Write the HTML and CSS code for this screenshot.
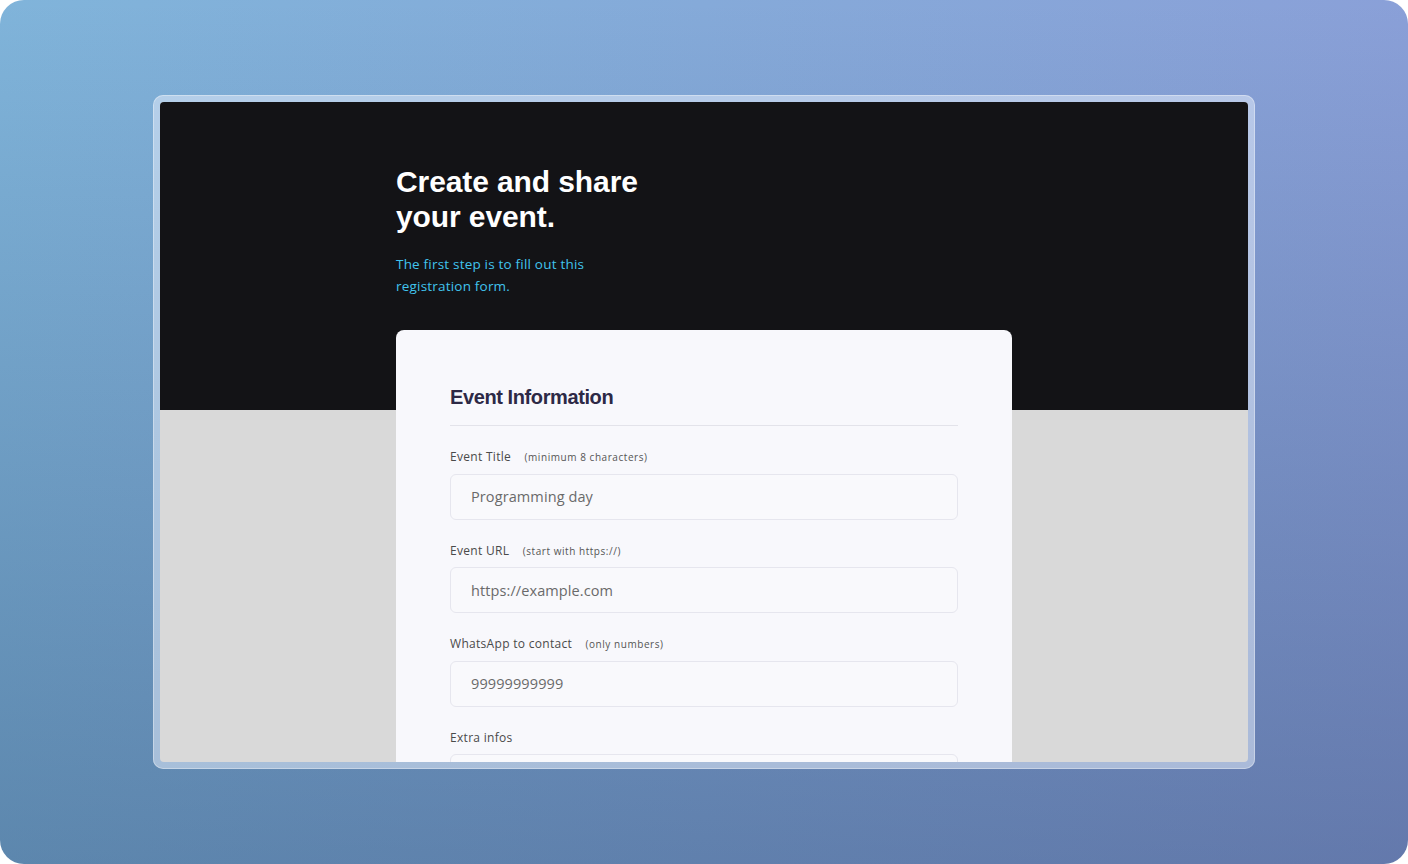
FILE: index.html
```html
<!DOCTYPE html>
<html lang="en">
<head>
<meta charset="utf-8">
<title>Create and share your event</title>
<link rel="stylesheet" href="styles.css">
</head>
<body>
<div class="backdrop">
  <div class="frame">
    <div class="screen">
      <header class="hero">
        <div class="column">
          <h1 class="hero-title">Create and share<br>your event.</h1>
          <p class="hero-sub">The first step is to fill out this registration form.</p>
        </div>
      </header>
      <main class="body">
        <div class="column">
          <form class="card">
            <h2 class="card-title">Event Information</h2>
            <div class="field">
              <label class="label">Event Title <span class="hint">(minimum 8 characters)</span></label>
              <div class="input">Programming day</div>
            </div>
            <div class="field">
              <label class="label">Event URL <span class="hint">(start with https://)</span></label>
              <div class="input">https://example.com</div>
            </div>
            <div class="field">
              <label class="label">WhatsApp to contact <span class="hint">(only numbers)</span></label>
              <div class="input">99999999999</div>
            </div>
            <div class="field">
              <label class="label">Extra infos</label>
              <div class="input textarea"></div>
            </div>
          </form>
        </div>
      </main>
    </div>
  </div>
</div>
</body>
</html>
```

FILE: styles.css
```css
* { box-sizing: border-box; }
html, body { margin: 0; padding: 0; background: #ffffff; }
body { width: 1408px; height: 864px; overflow: hidden; }

.backdrop {
  width: 1408px;
  height: 864px;
  border-radius: 24px;
  background:
    linear-gradient(180deg, rgba(10, 30, 70, 0) 0%, rgba(10, 30, 70, 0.3) 100%),
    linear-gradient(90deg, #80b4da 0%, #8aa0d8 100%);
  display: flex;
  align-items: center;
  justify-content: center;
}

.frame {
  width: 1102px;
  height: 674px;
  padding: 7px;
  border-radius: 10px;
  background: rgba(225, 235, 250, 0.55);
  box-shadow: 0 0 0 1px rgba(255, 255, 255, 0.35) inset;
}

.screen {
  width: 1088px;
  height: 660px;
  border-radius: 4px;
  overflow: hidden;
  background: #d9d9d9;
}

.column {
  width: 616px;
  margin: 0 auto;
}

.hero {
  background: #131316;
  height: 308px;
  padding-top: 62px;
}

.hero-title {
  margin: 0;
  font-family: "Liberation Sans", Arial, sans-serif;
  font-weight: 700;
  font-size: 30px;
  line-height: 35px;
  letter-spacing: -0.1px;
  color: #ffffff;
}

.hero-sub {
  margin: 19px 0 0;
  width: 205px;
  font-family: "Open Sans", sans-serif;
  font-size: 13.5px;
  line-height: 22px;
  letter-spacing: 0.2px;
  color: #41c4ee;
}

.body {
  height: 352px;
}

.card {
  margin-top: -80px;
  background: #f8f8fc;
  border-radius: 8px;
  padding: 55px 54px 40px;
}

.card-title {
  margin: 0;
  padding-bottom: 16px;
  border-bottom: 1px solid #e3e3ea;
  font-family: "Liberation Sans", Arial, sans-serif;
  font-weight: 700;
  font-size: 20px;
  line-height: 24px;
  letter-spacing: -0.4px;
  color: #2d2946;
}

.field {
  margin-top: 21px;
}

.label {
  display: block;
  height: 19px;
  font-family: "Open Sans", sans-serif;
  font-size: 12px;
  line-height: 19px;
  letter-spacing: 0.3px;
  color: #4a4a4a;
}

.hint {
  margin-left: 10px;
  font-size: 10px;
  line-height: 1;
  letter-spacing: 0.55px;
  color: #555555;
}

.input {
  margin-top: 7.5px;
  height: 46px;
  border: 1px solid #e6e6ee;
  border-radius: 6px;
  background: #f9f9fc;
  padding: 0 20px;
  display: flex;
  align-items: center;
  font-family: "Open Sans", sans-serif;
  font-size: 14.5px;
  letter-spacing: 0.1px;
  color: #6a6a6a;
}

.textarea {
  height: 100px;
}
```
